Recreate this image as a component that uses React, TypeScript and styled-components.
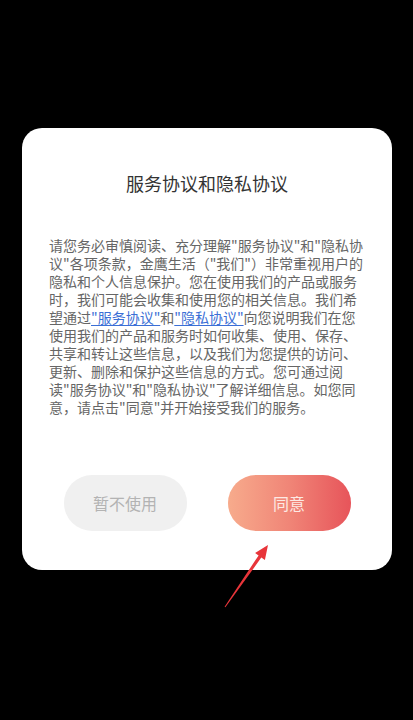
import React from "react";
import styled, { createGlobalStyle } from "styled-components";

const GlobalStyle = createGlobalStyle`
  html, body {
    margin: 0;
    padding: 0;
    background: #000;
  }
  body {
    font-family: "Noto Sans CJK SC", "Noto Sans", sans-serif;
  }
`;

const App: React.FC = () => {
  return (
    <Page>
      <GlobalStyle />
      <Card>
        <Title>服务协议和隐私协议</Title>
        <Body>
          请您务必审慎阅读、充分理解"服务协议"和"隐私协议"各项条款，金鹰生活（"我们"）非常重视用户的隐私和个人信息保护。您在使用我们的产品或服务时，我们可能会收集和使用您的相关信息。我们希望通过
          <Link>"服务协议"</Link>和<Link>"隐私协议"</Link>
          向您说明我们在您使用我们的产品和服务时如何收集、使用、保存、共享和转让这些信息，以及我们为您提供的访问、更新、删除和保护这些信息的方式。您可通过阅读"服务协议"和"隐私协议"了解详细信息。如您同意，请点击"同意"并开始接受我们的服务。
        </Body>
        <ButtonRow>
          <ActionButton type="button">暂不使用</ActionButton>
          <ActionButton type="button" $primary>
            同意
          </ActionButton>
        </ButtonRow>
      </Card>
      <Arrow viewBox="0 0 65 80" width="65" height="80">
        <polygon
          points="53,10 49.9,24.9 46.3,22.6 10.4,72.3 9.6,71.7 43.6,20.4 40.1,18.1"
          fill="#e8353a"
        />
      </Arrow>
    </Page>
  );
};

const Page = styled.div`
  position: relative;
  width: 413px;
  min-height: 720px;
  background: #000;
  padding: 128px 0 0 22px;
  box-sizing: border-box;
`;

const Card = styled.div`
  width: 370px;
  height: 442px;
  box-sizing: border-box;
  background: #fff;
  border-radius: 20px;
  padding: 44px 27px 39px;
  display: flex;
  flex-direction: column;
`;

const Title = styled.div`
  font-size: 18px;
  line-height: 22px;
  color: #333;
  text-align: center;
`;

const Body = styled.p`
  margin: 42px 0 0;
  font-size: 14px;
  line-height: 18px;
  color: #666;
  text-align: left;
`;

const Link = styled.span`
  color: #3b6fd6;
  text-decoration: underline;
  text-decoration-thickness: 1px;
  text-underline-offset: 2px;
`;

const ButtonRow = styled.div`
  margin-top: auto;
  display: flex;
  justify-content: center;
  gap: 41px;
`;

const ActionButton = styled.button<{ $primary?: boolean }>`
  width: 123px;
  height: 56px;
  border: none;
  border-radius: 28px;
  font-family: inherit;
  font-size: 16px;
  background: ${(p) =>
    p.$primary ? "linear-gradient(90deg, #f7ab8c 0%, #f08577 50%, #e7545a 100%)" : "#f0f0f0"};
  color: ${(p) => (p.$primary ? "#fde9e4" : "#b3b3b3")};
  padding: 0;
`;

const Arrow = styled.svg`
  position: absolute;
  left: 215px;
  top: 535px;
`;

export default App;
